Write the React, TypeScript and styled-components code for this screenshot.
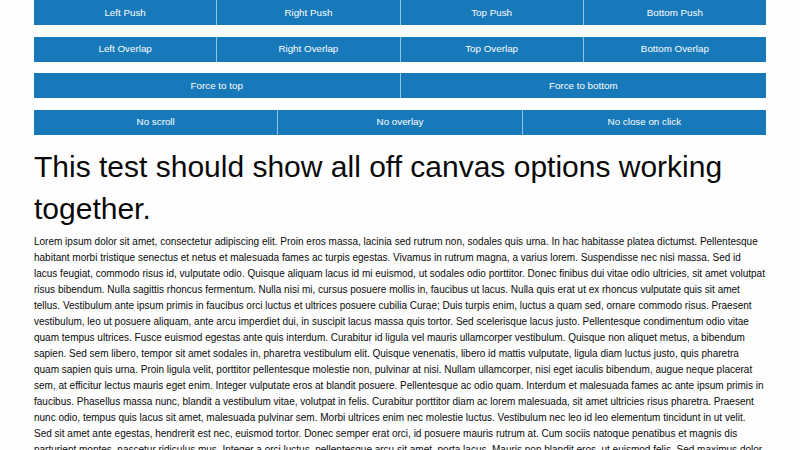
import styled, { createGlobalStyle } from 'styled-components';

const GlobalStyle = createGlobalStyle`
  html, body {
    margin: 0;
    padding: 0;
    background: #fefefe;
  }
  body {
    font-family: 'Liberation Sans', Arial, sans-serif;
    color: #0a0a0a;
  }
`;

const ROWS: string[][] = [
  ['Left Push', 'Right Push', 'Top Push', 'Bottom Push'],
  ['Left Overlap', 'Right Overlap', 'Top Overlap', 'Bottom Overlap'],
  ['Force to top', 'Force to bottom'],
  ['No scroll', 'No overlay', 'No close on click']
];

// line breaks as they fall in the original page
const LOREM_LINES = [
  'Lorem ipsum dolor sit amet, consectetur adipiscing elit. Proin eros massa, lacinia sed rutrum non, sodales quis urna. In hac habitasse platea dictumst. Pellentesque',
  'habitant morbi tristique senectus et netus et malesuada fames ac turpis egestas. Vivamus in rutrum magna, a varius lorem. Suspendisse nec nisi massa. Sed id',
  'lacus feugiat, commodo risus id, vulputate odio. Quisque aliquam lacus id mi euismod, ut sodales odio porttitor. Donec finibus dui vitae odio ultricies, sit amet volutpat',
  'risus bibendum. Nulla sagittis rhoncus fermentum. Nulla nisi mi, cursus posuere mollis in, faucibus ut lacus. Nulla quis erat ut ex rhoncus vulputate quis sit amet',
  'tellus. Vestibulum ante ipsum primis in faucibus orci luctus et ultrices posuere cubilia Curae; Duis turpis enim, luctus a quam sed, ornare commodo risus. Praesent',
  'vestibulum, leo ut posuere aliquam, ante arcu imperdiet dui, in suscipit lacus massa quis tortor. Sed scelerisque lacus justo. Pellentesque condimentum odio vitae',
  'quam tempus ultrices. Fusce euismod egestas ante quis interdum. Curabitur id ligula vel mauris ullamcorper vestibulum. Quisque non aliquet metus, a bibendum',
  'sapien. Sed sem libero, tempor sit amet sodales in, pharetra vestibulum elit. Quisque venenatis, libero id mattis vulputate, ligula diam luctus justo, quis pharetra',
  'quam sapien quis urna. Proin ligula velit, porttitor pellentesque molestie non, pulvinar at nisi. Nullam ullamcorper, nisi eget iaculis bibendum, augue neque placerat',
  'sem, at efficitur lectus mauris eget enim. Integer vulputate eros at blandit posuere. Pellentesque ac odio quam. Interdum et malesuada fames ac ante ipsum primis in',
  'faucibus. Phasellus massa nunc, blandit a vestibulum vitae, volutpat in felis. Curabitur porttitor diam ac lorem malesuada, sit amet ultricies risus pharetra. Praesent',
  'nunc odio, tempus quis lacus sit amet, malesuada pulvinar sem. Morbi ultrices enim nec molestie luctus. Vestibulum nec leo id leo elementum tincidunt in ut velit.',
  'Sed sit amet ante egestas, hendrerit est nec, euismod tortor. Donec semper erat orci, id posuere mauris rutrum at. Cum sociis natoque penatibus et magnis dis',
  'parturient montes, nascetur ridiculus mus. Integer a orci luctus, pellentesque arcu sit amet, porta lacus. Mauris non blandit eros, ut euismod felis. Sed maximus dolor',
  'nec ex volutpat, et fermentum nisl commodo. Nunc vel turpis at lectus porta cursus.'
];

export default function App() {
  return (
    <Page>
      <GlobalStyle />
      {ROWS.map((row, i) => (
        <ButtonGroup key={i}>
          {row.map(label => (
            <Button key={label} type="button">
              {label}
            </Button>
          ))}
        </ButtonGroup>
      ))}
      <Title>This test should show all off canvas options working together.</Title>
      <Text>
        {LOREM_LINES.map((line, i) => (
          <TextLine key={i}>{line}</TextLine>
        ))}
      </Text>
    </Page>
  );
}

const Page = styled.div`
  padding: 0 34px;
`;

const ButtonGroup = styled.div`
  display: flex;
  margin-bottom: 11.5px;
`;

const Button = styled.button`
  flex: 1 1 0;
  height: 25px;
  margin: 0;
  padding: 0 10px;
  border: 0;
  border-right: 1px solid #8cc3e9;
  background: #1779ba;
  color: #fefefe;
  font-family: 'Liberation Sans', Arial, sans-serif;
  font-size: 9.8px;
  line-height: 1;
  cursor: pointer;

  &:last-child {
    border-right: 0;
  }
`;

const Title = styled.h1`
  margin: 0 0 4px;
  font-size: 30px;
  font-weight: 400;
  line-height: 42px;
  color: #0a0a0a;
`;

const Text = styled.p`
  margin: 0;
  font-size: 10px;
  line-height: 16px;
  color: #0a0a0a;
`;

const TextLine = styled.span`
  display: block;
  white-space: nowrap;
`;
